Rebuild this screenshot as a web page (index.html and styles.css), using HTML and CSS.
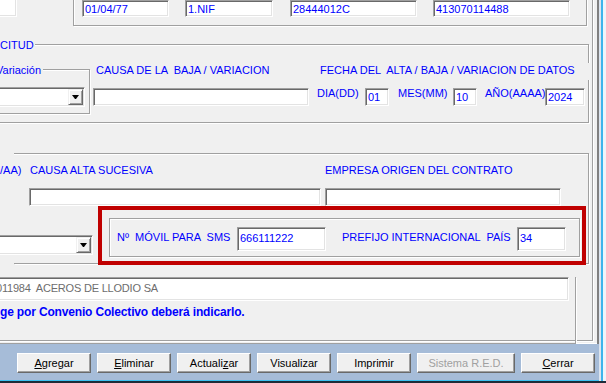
FILE: index.html
```html
<!DOCTYPE html>
<html lang="es">

<head>
    <meta charset="utf-8">
    <title>Solicitud de alta / baja / variación</title>
    <link rel="stylesheet" href="styles.css">
</head>

<body>
    <div class="window">
        <div class="client">
            <div class="main">
                <div class="outer etched">

                    <!-- datos del trabajador -->
                    <div class="ident">
                        <input class="txt stub" type="text" value="">
                        <div class="etched ident-frame">
                            <input class="txt f-nac" type="text" value="01/04/77">
                            <input class="txt f-tipo" type="text" value="1.NIF">
                            <input class="txt f-doc" type="text" value="28444012C">
                            <input class="txt f-naf" type="text" value="413070114488">
                        </div>
                    </div>

                    <!-- solicitud -->
                    <div class="etched frame-sol">
                        <span class="title">CITUD</span>
                        <div class="sol-body">
                            <div class="etched frame-var">
                                <span class="title">Variación</span>
                                <div class="combo combo-var"><span class="drop"></span></div>
                            </div>
                            <div class="field baja">
                                <label class="lbl">CAUSA DE LA  BAJA / VARIACION</label>
                                <input class="txt f-causa" type="text" value="">
                            </div>
                            <div class="field fecha">
                                <label class="lbl fecha-title">FECHA DEL  ALTA / BAJA / VARIACION DE DATOS</label>
                                <div class="date-row">
                                    <span class="lbl w-dia">DIA(DD)</span>
                                    <input class="txt f-dd" type="text" value="01">
                                    <span class="lbl w-mes">MES(MM)</span>
                                    <input class="txt f-mm" type="text" value="10">
                                    <span class="lbl w-ano">AÑO(AAAA)</span>
                                    <input class="txt f-aaaa" type="text" value="2024">
                                </div>
                            </div>
                        </div>
                    </div>

                    <!-- alta sucesiva -->
                    <div class="etched frame-alta">
                        <div class="alta-row">
                            <span class="lbl cut">/AA)</span>
                            <div class="field col-causa">
                                <label class="lbl">CAUSA ALTA SUCESIVA</label>
                                <input class="txt" type="text" value="">
                            </div>
                            <div class="field col-empresa">
                                <label class="lbl">EMPRESA ORIGEN DEL CONTRATO</label>
                                <input class="txt" type="text" value="">
                            </div>
                        </div>
                        <div class="sms-row">
                            <div class="combo combo-alta"><span class="drop"></span></div>
                            <div class="highlight">
                                <div class="etched sms-frame">
                                    <label class="lbl w-movil">Nº  MÓVIL PARA  SMS</label>
                                    <input class="txt tall f-movil" type="text" value="666111222">
                                    <label class="lbl w-prefijo">PREFIJO INTERNACIONAL  PAÍS</label>
                                    <input class="txt tall f-prefijo" type="text" value="34">
                                </div>
                            </div>
                        </div>
                    </div>

                    <!-- empresa -->
                    <div class="etched frame-emp">
                        <input class="txt tall razon" type="text" value="011984  ACEROS DE LLODIO SA" readonly>
                        <p class="aviso">ge por Convenio Colectivo deberá indicarlo.</p>
                    </div>

                </div>
            </div>

            <div class="bar">
                <button class="btn"><u>A</u>gregar</button>
                <button class="btn"><u>E</u>liminar</button>
                <button class="btn">Actuali<u>z</u>ar</button>
                <button class="btn">Visualizar</button>
                <button class="btn">Imprimir</button>
                <button class="btn btn-red" disabled>Sistema R.E.D.</button>
                <button class="btn"><u>C</u>errar</button>
            </div>
        </div>
        <div class="edge"></div>
    </div>
</body>

</html>
```

FILE: styles.css
```css
body {
    margin: 0;
    background-color: #f0f0f0;
    font-family: "Liberation Sans", Arial, sans-serif;
    font-size: 11px;
    line-height: 13px;
    overflow: hidden;
}

.window {
    display: flex;
    width: 606px;
    height: 383px;
    box-sizing: border-box;
    border-bottom: 2px solid #1f2b38;
}

.client {
    display: flex;
    flex-direction: column;
    width: 599px;
}

.edge {
    width: 7px;
    background: linear-gradient(to right, #dce4ee 0 2px, #3cb4ec 2px 4px, #eef4fa 4px);
}

.main {
    height: 344px;
    box-sizing: border-box;
    border-right: 2px solid #808080;
    box-shadow: inset 0 -1px #fff;
    overflow: hidden;
}

/* group box line: grey with a white line beside it */
.etched {
    box-sizing: border-box;
    border: 1px solid #a0a0a0;
    box-shadow: inset 1px 1px #fff, 1px 1px #fff;
}

.outer {
    width: 604px;
    height: 352px;
    margin: -11px 0 0 -11px;
    padding: 10px 0 0 10px;
}

.title {
    align-self: flex-start;
    margin-top: -6px;
    padding-right: 2px;
    background-color: #f0f0f0;
    color: #0000ff;
    white-space: pre;
}

.lbl {
    display: block;
    flex: none;
    color: #0000ff;
    white-space: pre;
}

.field {
    display: flex;
    flex-direction: column;
    flex: none;
}

/* text boxes */
.txt {
    flex: none;
    box-sizing: border-box;
    height: 18px;
    margin: 0;
    padding: 0 2px;
    border: 1px solid;
    border-color: #a0a0a0 #fff #fff #a0a0a0;
    box-shadow: inset 1px 1px #696969, inset -1px -1px #e3e3e3;
    background-color: #fff;
    color: #0000ff;
    font-family: "Liberation Sans", Arial, sans-serif;
    font-size: 11px;
    line-height: 13px;
    outline: none;
}

.txt.tall {
    height: 24px;
    padding-bottom: 3px;
}

.combo {
    display: flex;
    justify-content: flex-end;
    flex: none;
    box-sizing: border-box;
    height: 20px;
    padding: 1px;
    border: 1px solid;
    border-color: #a0a0a0 #fff #fff #a0a0a0;
    box-shadow: inset 1px 1px #696969, inset -1px -1px #e3e3e3;
    background-color: #fff;
}

.drop {
    display: flex;
    align-items: center;
    justify-content: center;
    box-sizing: border-box;
    width: 15px;
    height: 16px;
    border: 1px solid;
    border-color: #f0f0f0 #696969 #696969 #f0f0f0;
    box-shadow: inset 1px 1px #fff, inset -1px -1px #a0a0a0;
    background-color: #f0f0f0;
}

.drop::after {
    content: "";
    width: 1px;
    border-style: solid;
    border-width: 4px 3px 0;
    border-color: #000 transparent transparent;
}

/* top row */
.ident {
    display: flex;
    align-items: flex-start;
    height: 36px;
    margin-top: -10px;
}

.stub {
    width: 77px;
    height: 19px;
    margin: 8px 0 0 -60px;
}

.ident-frame {
    display: flex;
    align-items: flex-start;
    width: 514px;
    height: 36px;
    margin-left: 56px;
    padding-top: 9px;
}

.ident-frame .txt {
    height: 17px;
}

.f-nac {
    width: 87px;
    margin-left: 8px !important;
}

.f-tipo {
    width: 88px;
    margin-left: 16px !important;
}

.f-doc {
    width: 127px;
    margin-left: 17px !important;
}

.f-naf {
    width: 137px;
    margin-left: 16px !important;
}

/* solicitud */
.frame-sol {
    display: flex;
    flex-direction: column;
    width: 609px;
    height: 79px;
    margin: 18px 0 0 -20px;
}

.frame-sol > .title {
    margin-left: 19px;
    padding-right: 1px;
}

.sol-body {
    display: flex;
    align-items: flex-start;
}

.frame-var {
    display: flex;
    flex-direction: column;
    flex: none;
    width: 120px;
    height: 45px;
    margin: 17px 0 0 -11px;
}

.frame-var > .title {
    margin-left: 25px;
}

.combo-var {
    width: 95px;
    margin: 10px 0 0 19px;
}

.baja {
    margin: 12px 0 0 3px;
}

.baja .lbl {
    padding-left: 3px;
}

.f-causa {
    width: 216px;
    margin-top: 11px;
}

.fecha {
    margin: 11px 0 0 8px;
}

.fecha-title {
    box-sizing: border-box;
    width: 275px;
    height: 17px;
    padding: 1px 0 0 3px;
    background-color: #f0f0f0;
}

.date-row {
    display: flex;
    align-items: flex-start;
    margin-top: 8px;
}

.date-row .lbl {
    margin-top: -1px;
}

.w-dia {
    width: 48px;
}

.w-mes {
    width: 55px;
    margin-left: 9px;
}

.w-ano {
    width: 60px;
    margin-left: 8px;
}

.f-dd,
.f-mm {
    width: 24px;
}

.f-aaaa {
    width: 40px;
}

/* alta sucesiva */
.frame-alta {
    width: 575px;
    height: 111px;
    margin: 30px 0 0 14px;
    border-left: none;
    box-shadow: inset 0 1px #fff, 1px 1px #fff;
}

.alta-row {
    display: flex;
    align-items: flex-start;
    margin-left: -14px;
}

.cut {
    width: 29px;
    margin-top: 10px;
}

.col-causa {
    width: 292px;
    margin-top: 10px;
}

.col-causa .lbl {
    padding-left: 1px;
}

.col-empresa {
    width: 236px;
    margin: 10px 0 0 4px;
}

.col-causa .txt,
.col-empresa .txt {
    width: 100%;
    margin-top: 11px;
}

.sms-row {
    display: flex;
    align-items: flex-start;
    margin-left: -14px;
}

.combo-alta {
    width: 103px;
    margin: 29px 0 0 -10px;
}

.highlight {
    flex: none;
    margin-left: 5px;
    padding: 8px 2px 4px 7px;
    border: 4px solid #c00000;
}

.sms-frame {
    display: flex;
    align-items: flex-start;
    width: 471px;
    height: 39px;
}

.sms-frame .lbl {
    margin-top: 12px;
}

.sms-frame .txt {
    margin-top: 8px;
}

.w-movil {
    width: 120px;
    margin-left: 7px;
}

.f-movil {
    width: 89px;
}

.w-prefijo {
    width: 175px;
    margin-left: 16px;
}

.f-prefijo {
    width: 49px;
}

/* empresa */
.frame-emp {
    width: 596px;
    height: 67px;
    margin-left: -20px;
    border-top: none;
    box-shadow: 1px 1px #fff;
}

.razon {
    display: block;
    width: 579px;
    margin: 13px 0 0 9px;
    padding-left: 5px;
    color: #6d6d6d;
    letter-spacing: -0.2px;
}

.aviso {
    margin: 4px 0 0 19px;
    color: #0000ff;
    font-size: 12px;
    font-weight: bold;
    line-height: 14px;
    letter-spacing: -0.16px;
    white-space: nowrap;
}

/* button bar */
.bar {
    display: flex;
    gap: 6px;
    height: 37px;
    box-sizing: border-box;
    padding: 9px 0 0 17px;
    background-color: #a6bcd8;
    border-bottom: 1px solid #3cc0f0;
}

.btn {
    width: 74px;
    height: 20px;
    box-sizing: border-box;
    padding: 0;
    border: 1px solid;
    border-color: #fff #696969 #696969 #fff;
    box-shadow: inset -1px -1px #a0a0a0;
    background-color: #f0f0f0;
    color: #000;
    font-family: "Liberation Sans", Arial, sans-serif;
    font-size: 11px;
}

.btn-red {
    width: 98px;
    color: #a0a0a0;
}
```
